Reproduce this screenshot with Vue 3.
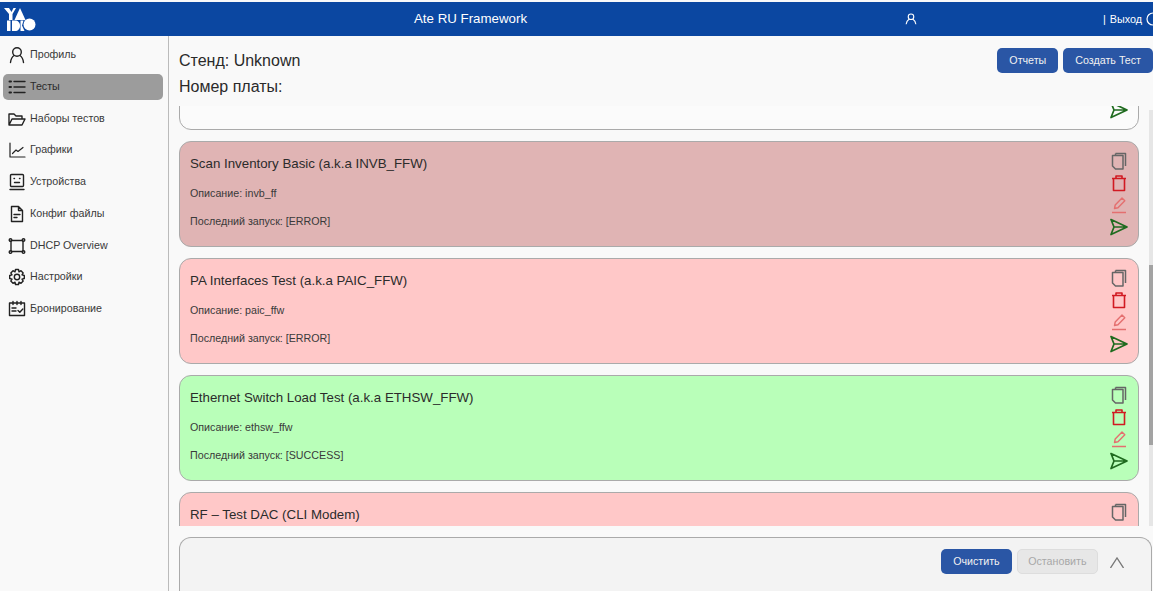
<script setup>
const nav = [
  { label: 'Профиль', icon: 'user' },
  { label: 'Тесты', icon: 'list', active: true },
  { label: 'Наборы тестов', icon: 'folder' },
  { label: 'Графики', icon: 'chart' },
  { label: 'Устройства', icon: 'device' },
  { label: 'Конфиг файлы', icon: 'file' },
  { label: 'DHCP Overview', icon: 'dhcp' },
  { label: 'Настройки', icon: 'gear' },
  { label: 'Бронирование', icon: 'cal' }
]
const cards = [
  { title: 'Scan Inventory Basic (a.k.a INVB_FFW)', desc: 'invb_ff', run: '[ERROR]', tone: 'dim' },
  { title: 'PA Interfaces Test (a.k.a PAIC_FFW)', desc: 'paic_ffw', run: '[ERROR]', tone: 'err' },
  { title: 'Ethernet Switch Load Test (a.k.a ETHSW_FFW)', desc: 'ethsw_ffw', run: '[SUCCESS]', tone: 'ok' },
  { title: 'RF – Test DAC (CLI Modem)', tone: 'err' }
]
</script>

<template>
  <div class="app">
    <header class="top">
      <svg class="logo" width="36" height="36" viewBox="0 0 36 36">
        <path fill="#fff" d="M4 8h5l2.500 4 2-4H16l-3.500 6v6H9v-6z" />
        <path fill="#fff" d="M20 8l5.500 12h-11z" />
        <rect x="7" y="20.500" width="3.500" height="10.500" fill="#fff" />
        <path fill="#fff" d="M12 20.500h3c3 0 5 2 5 5.250S18 31 15 31h-3z" />
        <path fill="#fff" d="M20.500 20.500h3l-1.500 5 2.500 5.500h-4z" />
        <circle cx="29.500" cy="24.500" r="6" fill="#fff" />
      </svg>
      <div class="title">Ate RU Framework</div>
      <svg class="top-user" width="12" height="12" viewBox="0 0 16 16" fill="none" stroke="#fff" stroke-width="1.500">
        <circle cx="8" cy="5" r="3.700" /><path d="M1.500 15c.6-3.500 2.500-6 3.800-6.800M14.500 15c-.6-3.500-2.500-6-3.800-6.800" />
      </svg>
      <div class="logout"><span class="bar">|</span> Выход</div>
      <svg class="exit" width="14" height="14" viewBox="0 0 14 14" fill="none" stroke="#fff" stroke-width="1.200"><circle cx="7" cy="7" r="6" /><path d="M7 7h7" /></svg>
    </header>
    <div class="body">
      <aside class="side">
        <div v-for="n in nav" :key="n.label" class="nav" :class="{ active: n.active }">
          <svg width="18" height="18" viewBox="0 0 18 18" fill="none" stroke="#222" stroke-width="1.400" stroke-linecap="round" stroke-linejoin="round">
            <template v-if="n.icon === 'user'"><circle cx="9" cy="6" r="4.300" /><path d="M2.500 16.500c.4-3.500 2-6 3.600-7M15.500 16.500c-.4-3.500-2-6-3.600-7" /></template>
            <template v-else-if="n.icon === 'list'"><path d="M6 3.500h11M6 9h11M6 14.500h11" /><path d="M1.500 3.500h1.500M1.500 9h1.500M1.500 14.500h1.500" stroke-width="2" /></template>
            <template v-else-if="n.icon === 'folder'"><path d="M1 15V4h5l2 2h6v3M1 15l3-6h13l-3 6z" /></template>
            <template v-else-if="n.icon === 'chart'"><path d="M2 2v14h15" stroke-width="1.200" /><path d="M4.500 12.500l3.500-3.500 2 1.500 5-4" stroke-width="1.200" /></template>
            <template v-else-if="n.icon === 'device'"><rect x="2.500" y="1.500" width="13" height="12" rx="1" /><path d="M6 5.500h.5M11.500 5.500h.5M6.500 9.500h5M2 16.500h14" /></template>
            <template v-else-if="n.icon === 'file'"><path d="M3.500 1.500h7l4 4v11h-11zM10.500 1.500v4h4M6 9.500h6M6 12.500h3" /></template>
            <template v-else-if="n.icon === 'dhcp'"><path d="M3.500 3.500h11M3.500 14.500h11M3 4v10M15 4v10" /><circle cx="2.500" cy="3" r="1.300" /><circle cx="15.500" cy="3" r="1.300" /><circle cx="2.500" cy="15" r="1.300" /><circle cx="15.500" cy="15" r="1.300" /></template>
            <template v-else-if="n.icon === 'gear'"><circle cx="9" cy="9" r="2.700" /><path d="M7.500 1.500h3l.5 2.300 2-1.100 2.200 2.200-1.200 2 2.300.6v3l-2.300.6 1.200 2-2.200 2.200-2-1.100-.5 2.300h-3l-.5-2.300-2 1.100-2.200-2.200 1.200-2-2.300-.6v-3l2.300-.6-1.200-2 2.200-2.200 2 1.100z" /></template>
            <template v-else><rect x="1.500" y="3" width="15" height="12.500" /><path d="M5 1.500v3M9 1.500v3M13 1.500v3M4 8h4M4 11h4M10 10.500l1.800 1.800 3-3.300" /></template>
          </svg>
          <span class="nav-label">{{ n.label }}</span>
        </div>
      </aside>
      <main class="main">
        <div class="head">
          <div class="stand">
            <div class="h">Стенд: Unknown</div>
            <div class="h second">Номер платы:</div>
          </div>
          <div class="btns">
            <button class="btn">Отчеты</button>
            <button class="btn">Создать Тест</button>
          </div>
        </div>
        <div class="list-wrap">
          <div class="list">
            <div class="card white">
              <div class="actions end">
                <svg width="18" height="18" viewBox="0 0 18 18" fill="none" stroke="#1f6b1f" stroke-width="1.700" stroke-linejoin="round"><path d="M1 1.500L17 9 1 16.500 4 9zM4 9h13" /></svg>
              </div>
            </div>
            <div v-for="c in cards" :key="c.title" class="card" :class="c.tone">
              <div class="info">
                <div class="name">{{ c.title }}</div>
                <div v-if="c.desc" class="line">Описание: {{ c.desc }}</div>
                <div v-if="c.run" class="line">Последний запуск: {{ c.run }}</div>
              </div>
              <div class="actions">
                <svg width="18" height="18" viewBox="0 0 18 18" fill="none" stroke="#666" stroke-width="1.500" stroke-linejoin="round"><path d="M5.500 1.500h10V14M5.500 1.500v2M2.500 3.500H13v13.500H5.500l-3-3z" /></svg>
                <svg width="18" height="18" viewBox="0 0 18 18" fill="none" stroke="#d11a22" stroke-width="1.600" stroke-linejoin="round"><path d="M2 4.500h14M6 4.500V2h6v2.500M3.500 4.500V16.500h11V4.500" /></svg>
                <svg width="18" height="18" viewBox="0 0 18 18" fill="none" stroke="#e46f6f" stroke-width="1.400" stroke-linejoin="round"><path d="M4.500 12.500l.7-3.500L12 2l2.800 2.800-6.800 7zM2 16.500h14" /></svg>
                <svg width="18" height="18" viewBox="0 0 18 18" fill="none" stroke="#1f6b1f" stroke-width="1.700" stroke-linejoin="round"><path d="M1 1.500L17 9 1 16.500 4 9zM4 9h13" /></svg>
              </div>
            </div>
          </div>
          <div class="scroll"><div class="thumb"></div></div>
        </div>
        <div class="console">
          <button class="btn">Очистить</button>
          <button class="btn off">Остановить</button>
          <svg class="chev" width="14" height="11" viewBox="0 0 14 11" fill="none" stroke="#777" stroke-width="1.300"><path d="M.5 11L7 1l6.500 10" /></svg>
        </div>
      </main>
    </div>
  </div>
</template>

<style>
html, body { margin: 0; background: #f9f9f9; overflow: hidden; }
</style>
<style scoped>
.app { width: 1153px; height: 591px; overflow: hidden; display: flex; flex-direction: column; font-family: "Liberation Sans", Arial, sans-serif; color: #212529; background: #f9f9f9; }
.top { height: 34px; margin-top: 2px; background: #0b47a1; color: #fff; position: relative; flex: none; }
.logo { position: absolute; left: 0; top: -2px; }
.title { position: absolute; left: 414px; top: 9px; font-size: 13.300px; line-height: 16px; }
.top-user { position: absolute; left: 905px; top: 11px; }
.logout { position: absolute; left: 1103px; top: 10px; font-size: 10.800px; line-height: 14px; white-space: pre; }
.bar { margin-right: 1px; }
.exit { position: absolute; left: 1146px; top: 10px; }
.body { flex: 1; display: flex; min-height: 0; }
.side { width: 168px; flex: none; border-right: 1px solid #bbb; padding-top: 6px; }
.nav { height: 26px; margin: 0 5px 5.750px 3px; padding-left: 5px; display: flex; align-items: center; gap: 4px; font-size: 10.700px; color: #3a3a3a; border-radius: 5px; }
.nav svg { flex: none; }
.nav-label { padding-bottom: 2px; }
.nav.active { background: #9c9c9c; color: #2b2b2b; }
.main { flex: 1; display: flex; flex-direction: column; min-width: 0; }
.head { height: 70px; flex: none; display: flex; justify-content: space-between; }
.stand { padding: 14px 0 0 10px; }
.h { font-size: 16px; line-height: 22px; color: #2a2a2a; }
.second { margin-top: 4px; }
.btns { display: flex; gap: 5px; padding-top: 11.500px; align-items: flex-start; }
.btn { height: 25px; padding: 0 12px; border: 0; border-radius: 5px; background: #2a56a5; color: #f1f1f1; font: 10.700px "Liberation Sans", Arial, sans-serif; }
.list-wrap { height: 420px; flex: none; display: flex; overflow: hidden; }
.list { flex: 1; padding: 0 10px 0 10px; min-width: 0; }
.card { height: 104px; margin-bottom: 11px; border: 1px solid #aaa; border-radius: 12px; display: flex; justify-content: space-between; color: #2b2b2b; }
.white { margin-top: -82px; background: #fbfbfb; }
.dim { background: #e0b4b4; }
.err { background: #ffc8c8; }
.ok { background: #b9ffb9; }
.info { padding: 13px 0 0 10px; }
.name { font-size: 13.300px; line-height: 17px; }
.line { font-size: 10.700px; line-height: 14px; margin-top: 14px; color: #3a3a3a; }
.line + .line { margin-top: 14px; }
.actions { width: 28px; padding-top: 10px; display: flex; flex-direction: column; gap: 4px; align-items: flex-start; }
.end { margin-left: auto; padding-top: 76px; }
.scroll { width: 4px; flex: none; background: #e6e6e6; margin-top: 4px; }
.thumb { margin-top: 155px; height: 180px; background: #a3a3a3; }
.console { height: 60px; flex: none; margin: 11px 1px 0 10px; border: 1px solid #aaa; border-bottom: 0; border-radius: 12px 12px 0 0; background: #f3f3f3; display: flex; gap: 5px; justify-content: flex-end; align-items: flex-start; padding: 10.500px 53px 0 0; box-sizing: border-box; position: relative; }
.off { background: #e7e7e7; color: #a8a8a8; border: 1px solid #ddd; padding: 0 10.500px; }
.chev { position: absolute; right: 27px; top: 19px; }
</style>
